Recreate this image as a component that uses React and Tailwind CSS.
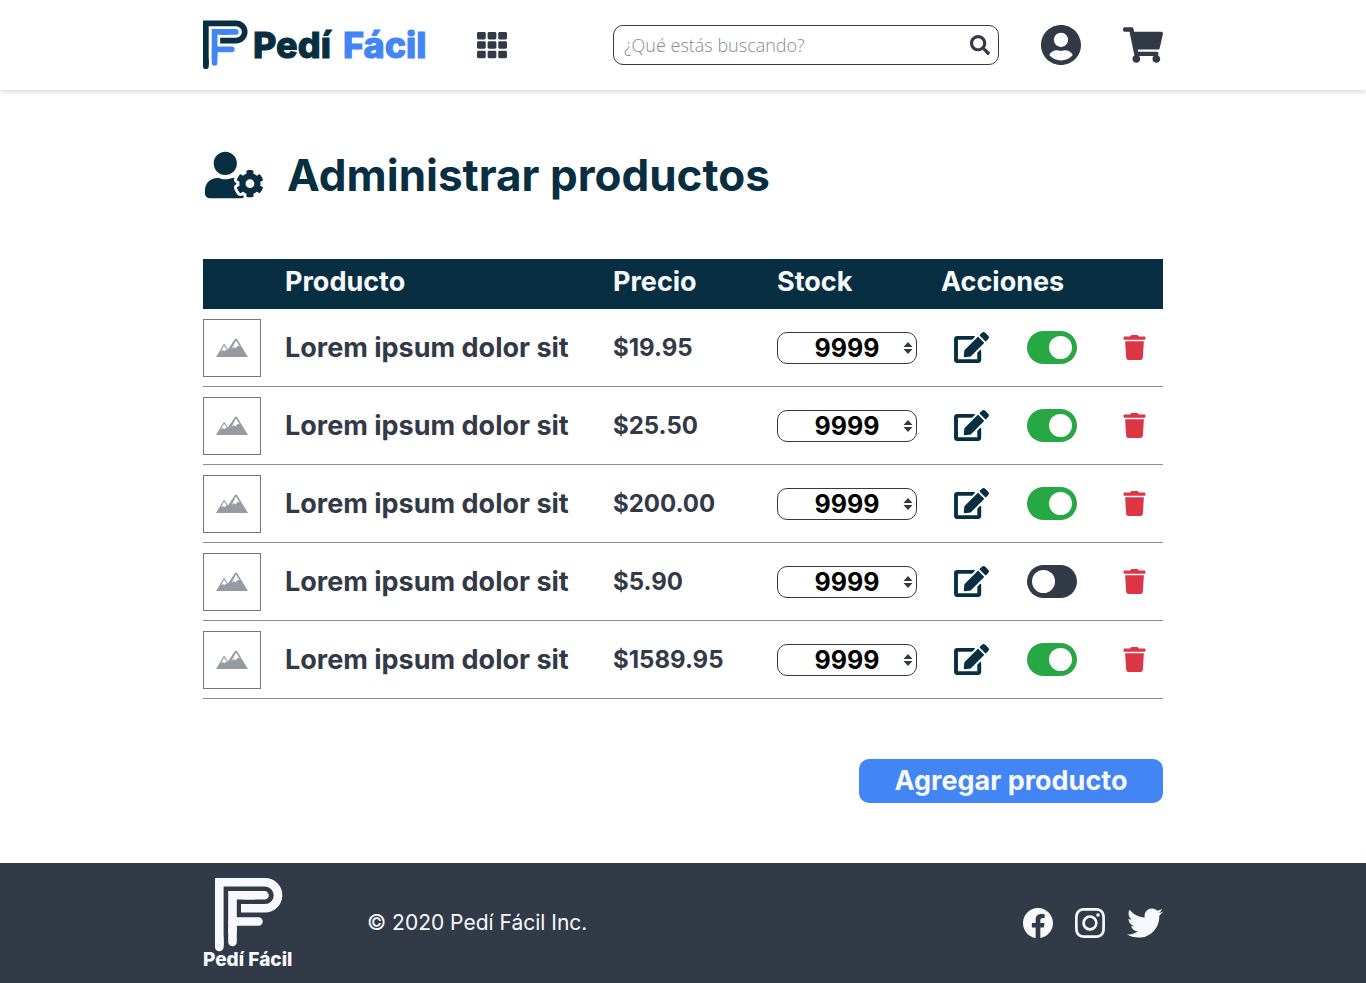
import { FaTh, FaShoppingCart, FaSearch, FaUserCog, FaTrash, FaTwitter } from "react-icons/fa";
import { BsFacebook, BsInstagram } from "react-icons/bs";

const products = [
  { price: "$19.95", on: true },
  { price: "$25.50", on: true },
  { price: "$200.00", on: true },
  { price: "$5.90", on: false },
  { price: "$1589.95", on: true },
];

function Mark({ outer, inner, className }) {
  return (
    <svg viewBox="0 0 68 74" className={className} fill="none" strokeWidth="8.600" aria-hidden="true">
      <path d="M4.300 68V4.300H50a13 13 0 0 1 0 26H26" stroke={outer} />
      <path d="M4.300 60V69" stroke={outer} strokeLinecap="round" />
      <path d="M17.500 55V17.300H40" stroke={inner} />
      <path d="M17.500 50V64M30 17.300H49.500M17.500 43.500H43.500" stroke={inner} strokeLinecap="round" />
    </svg>
  );
}

function UserIcon() {
  return (
    <svg viewBox="0 8 496 496" className="size-10" fill="currentColor" aria-hidden="true">
      <path d="M248 8C111 8 0 119 0 256s111 248 248 248 248-111 248-248S385 8 248 8zm0 96c48.600 0 88 39.400 88 88s-39.400 88-88 88-88-39.400-88-88 39.400-88 88-88zm0 344c-58.700 0-111.300-26.600-146.500-68.200 18.800-35.400 55.600-59.800 98.500-59.800 2.400 0 4.800.4 7.100 1.100 13 4.200 26.600 6.900 40.900 6.900 14.300 0 28-2.700 40.900-6.900 2.300-.7 4.700-1.100 7.100-1.100 42.900 0 79.700 24.400 98.500 59.800C359.300 421.400 306.700 448 248 448z" />
    </svg>
  );
}

function EditIcon() {
  return (
    <svg viewBox="0 0 576 512" className="h-[31px] w-[35px]" fill="currentColor" aria-hidden="true">
      <path d="M402.6 83.2l90.2 90.2c3.8 3.8 3.8 10 0 13.8L274.400 405.600l-92.800 10.300c-12.400 1.400-22.900-9.100-21.500-21.500l10.300-92.800L388.800 83.200c3.800-3.800 10-3.800 13.800 0zm162-22.900l-48.800-48.800c-15.200-15.200-39.900-15.200-55.200 0l-35.400 35.400c-3.800 3.800-3.800 10 0 13.800l90.200 90.200c3.800 3.800 10 3.800 13.800 0l35.400-35.400c15.200-15.300 15.200-40 0-55.200zM384 346.200V448H64V128h229.800c3.200 0 6.200-1.300 8.500-3.500l40-40c7.600-7.600 2.200-20.500-8.500-20.500H48C21.500 64 0 85.500 0 112v352c0 26.500 21.500 48 48 48h352c26.500 0 48-21.500 48-48V306.200c0-10.700-12.900-16-20.500-8.500l-40 40c-2.200 2.300-3.500 5.300-3.500 8.500z" />
    </svg>
  );
}

function Mountains() {
  return (
    <svg viewBox="0 0 32 20" className="w-8" aria-hidden="true">
      <path fill="#969ba2" fillRule="evenodd" d="M0 19L7.500 6.500Q8 5.500 8.700 6.500L12 11.500L19 1Q20 0 21 1L32 19ZM5 13.500L7 12L8.300 13.300L10.800 11.300L8 7.800ZM15.500 11L18 9L19.500 10.500L21.800 7.800L23.700 8.500L20 2.600Z" />
    </svg>
  );
}

export default function App() {
  return (
    <div className="flex min-h-screen flex-col bg-white font-['Inter',sans-serif] text-[#323947]">
      <header className="shadow-[0_2px_5px_rgba(0,0,0,0.14)]">
        <div className="mx-auto flex h-[90px] max-w-[960px] items-center">
          <a href="#" aria-label="Pedí Fácil" className="flex w-[274px] items-center gap-[5px]">
            <Mark outer="#082f41" inner="#4285f4" className="h-[50px] w-[45px]" />
            <span className="flex gap-3 whitespace-nowrap text-4xl font-extrabold text-[#082f41] [-webkit-text-stroke:1px_currentColor]">
              <span>Pedí</span> <span className="text-[#4285f4]">Fácil</span>
            </span>
          </a>
          <button aria-label="Categorías"><FaTh size={30} /></button>
          <label className="ml-auto flex h-10 w-[386px] items-center rounded-[10px] border border-[#323947] px-2">
            <input aria-label="Buscar" placeholder="¿Qué estás buscando?" className="min-w-0 flex-1 px-0.5 font-['Open_Sans',sans-serif] text-lg font-light outline-none placeholder:text-[#858b94]" />
            <FaSearch size={20} />
          </label>
          <button aria-label="Cuenta" className="ml-[42px]"><UserIcon /></button>
          <button aria-label="Carrito" className="ml-[42px]"><FaShoppingCart size={40} /></button>
        </div>
      </header>

      <main className="mx-auto w-full max-w-[960px] flex-1 py-[60px]">
        <h1 className="flex h-[50px] items-center gap-6 pl-0.5 text-[44px] font-bold text-[#082f41]">
          <FaUserCog size={58} />
          Administrar productos
        </h1>
        <table className="mt-[59px] w-full table-fixed border-separate border-spacing-0 text-left">
          <colgroup>
            <col className="w-[82px]" /><col className="w-[328px]" /><col className="w-[164px]" /><col className="w-[164px]" /><col />
          </colgroup>
          <thead>
            <tr className="h-[50px] bg-[#082f41] text-[27px] leading-8 text-[#f8f9ff] [&>*]:p-0 [&>*]:pb-1">
              <td></td>
              <th scope="col" className="font-bold">Producto</th>
              <th scope="col" className="font-bold">Precio</th>
              <th scope="col" className="font-bold">Stock</th>
              <th scope="col" className="font-bold">Acciones</th>
            </tr>
          </thead>
          <tbody>
            {products.map((p) => (
              <tr key={p.price} className="h-[78px] text-2xl font-bold [&>td]:border-b [&>td]:border-[#8c8c8c] [&>td]:p-0">
                <td><div className="flex size-[58px] items-center justify-center border border-[#777]"><Mountains /></div></td>
                <td className="text-[27px] leading-8 whitespace-nowrap">Lorem ipsum dolor sit</td>
                <td>{p.price}</td>
                <td>
                  <div className="relative h-8 w-[140px]">
                    <select aria-label="Stock" className="block size-full appearance-none rounded-[10px] border border-[#323947] bg-white text-center text-[25px] leading-[30px] text-black">
                      <option>9999</option>
                    </select>
                    <svg viewBox="0 0 10 12" className="pointer-events-none absolute top-2.5 right-1 h-3 w-2.5" fill="#323947" aria-hidden="true"><path d="M5 0L9.500 5H.5ZM.5 7H9.500L5 12Z" /></svg>
                  </div>
                </td>
                <td>
                  <div className="flex items-center pl-[13px]">
                    <button aria-label="Editar" className="text-[#082f41]"><EditIcon /></button>
                    <label className="ml-[38px] flex">
                      <input type="checkbox" role="switch" aria-label="Activo" defaultChecked={p.on} className="peer sr-only" />
                      <span className="flex h-[33px] w-[50px] items-center rounded-full bg-[#323947] px-[5px] peer-checked:justify-end peer-checked:bg-[#28a745]">
                        <span className="size-[23px] rounded-full bg-white"></span>
                      </span>
                    </label>
                    <button aria-label="Eliminar" className="ml-[45px] text-[#dc3545]"><FaTrash size={25} /></button>
                  </div>
                </td>
              </tr>
            ))}
          </tbody>
        </table>
        <div className="mt-[60px] flex justify-end">
          <button className="h-11 w-[304px] rounded-[10px] bg-[#4285f4] text-[27px] leading-8 font-bold text-[#f8f9ff]">Agregar producto</button>
        </div>
      </main>

      <footer className="bg-[#323947] text-[#f8f9ff]">
        <div className="mx-auto flex h-[120px] max-w-[960px] items-center">
          <a href="#" className="flex w-[164px] flex-col items-start">
            <Mark outer="#f8f9ff" inner="#f8f9ff" className="ml-3 h-[74px] w-[68px]" />
            <span className="text-[19px] leading-4 font-extrabold">Pedí Fácil</span>
          </a>
          <p className="text-[21px]">© 2020 Pedí Fácil Inc.</p>
          <div className="ml-auto flex items-center gap-[22px]">
            <a href="#" aria-label="Facebook"><BsFacebook size={30} /></a>
            <a href="#" aria-label="Instagram"><BsInstagram size={30} /></a>
            <a href="#" aria-label="Twitter"><FaTwitter size={36} /></a>
          </div>
        </div>
      </footer>
    </div>
  );
}
